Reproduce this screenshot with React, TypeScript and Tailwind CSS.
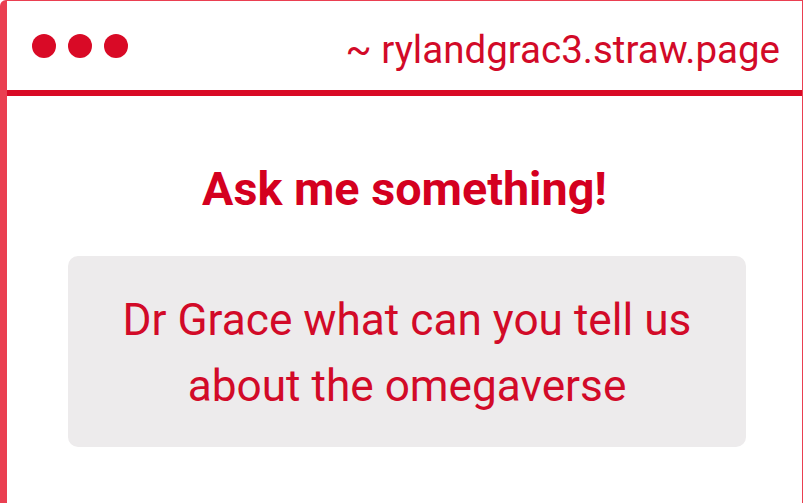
export default function App() {
  return (
    <div
      className="w-[803px] h-[503px] overflow-hidden bg-white"
      style={{ fontFamily: "Roboto, 'Noto Sans', sans-serif" }}
    >
      <div className="h-full w-full bg-white border-l-[7px] border-t border-r border-[#ea3f51] rounded-tl-[6px] flex flex-col">
        {/* title bar */}
        <div className="h-[89px] flex items-center justify-between pl-[25px] pr-[22px] shrink-0">
          <div className="flex items-center gap-[12px] mt-[1px]">
            <span className="block w-[24px] h-[24px] rounded-full bg-[#d90a26]" />
            <span className="block w-[24px] h-[24px] rounded-full bg-[#d90a26]" />
            <span className="block w-[24px] h-[24px] rounded-full bg-[#d90a26]" />
          </div>
          <div className="text-[38.5px] leading-none text-[#d20a28] mt-[9px]">~ rylandgrac3.straw.page</div>
        </div>
        <div className="h-[6px] bg-[#d90a26] shrink-0" />
        {/* question card */}
        <div className="flex flex-col items-center pt-[70px]">
          <h1 className="text-[46.7px] leading-none font-bold text-[#d4001f]">Ask me something!</h1>
          <div className="mt-[43px] w-[678px] h-[191px] ml-[5px] rounded-[10px] bg-[#edebec] flex items-center justify-center text-center">
            <p className="text-[44.2px] leading-[66px] text-[#d20a28] whitespace-nowrap pt-[4px]">
              Dr Grace what can you tell us
              <br />
              about the omegaverse
            </p>
          </div>
        </div>
      </div>
    </div>
  );
}
